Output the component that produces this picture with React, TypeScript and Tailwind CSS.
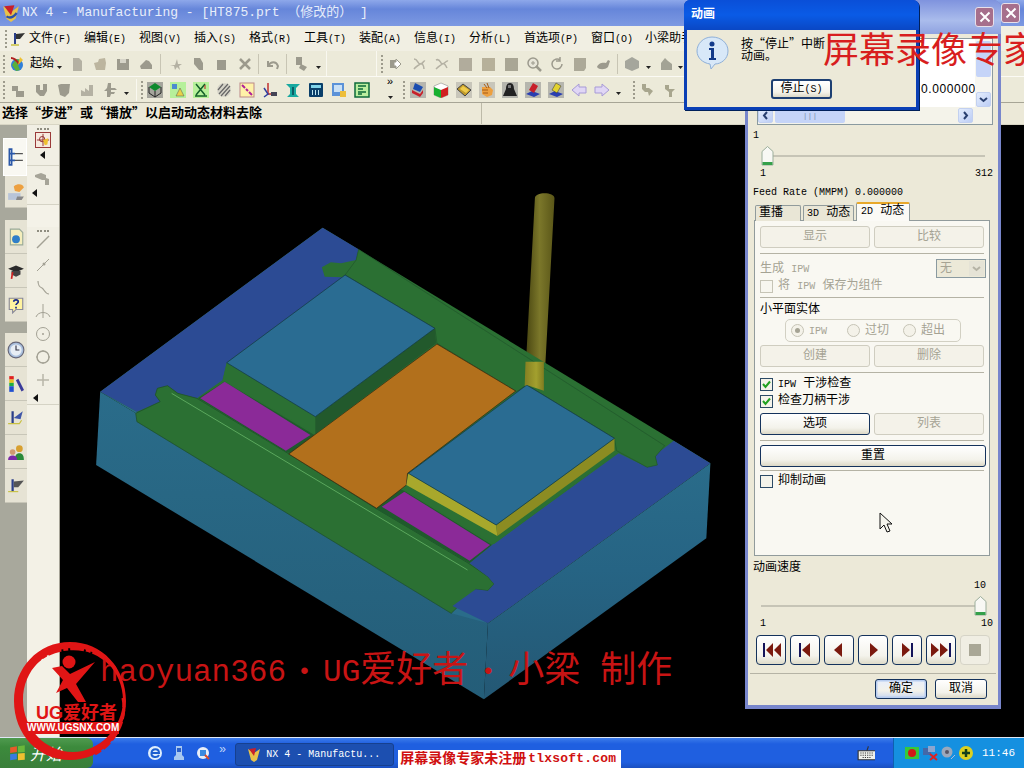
import React from 'react';

const L = ({ children }: { children: React.ReactNode }) => <span className="text-[10px]">{children}</span>;

const Ico = ({ children, size = 16 }: { children: React.ReactNode; size?: number }) => (
  <svg width={size} height={size} viewBox="0 0 16 16" className="shrink-0">
    {children}
  </svg>
);

const Cell = ({ children }: { children: React.ReactNode }) => (
  <div className="w-[23px] h-[22px] flex items-center justify-center shrink-0">
    <Ico>{children}</Ico>
  </div>
);

const Grip = ({ cls = '' }: { cls?: string }) => (
  <div className={`w-[2px] h-[18px] shrink-0 border-l-2 border-dotted border-[#9d9b8c] ${cls}`} />
);
const Sep = ({ cls = '' }: { cls?: string }) => <div className={`w-px h-[20px] shrink-0 bg-[#c8c5b4] ${cls}`} />;
const Drop = ({ cls = '' }: { cls?: string }) => (
  <svg width="7" height="16" viewBox="0 0 7 16" className={`shrink-0 ${cls}`}>
    <path d="M1 10h5l-2.500 3z" fill="#222" />
  </svg>
);

const G = '#b4b1a3';
const G2 = '#9c9a8d';

const fileIcons = [
  <path d="M4 2h6l3 3v10H4z" fill={G} />,
  <path d="M2 7l4-1 1-3 6-1 1 5-1 7H4z" fill="#bcb59f" />,
  <g><path d="M2 3h12v11H2z" fill={G2} /><path d="M5 3h6v4H5z" fill="#d6d4c8" /></g>,
  <path d="M2 10l6-6 3 1 3 4v4H3z" fill={G2} />,
];
const editIcons = [
  <path d="M2 9h5l2-6 1 5h4l-3 2 1 4-3-3-2 3-1-4z" fill={G} />,
  <path d="M3 2h6l3 5v7H8L3 8z" fill={G2} />,
  <path d="M3 4h9v10H3z" fill={G2} />,
  <path d="M3 3l10 10M13 3L3 13" stroke={G2} strokeWidth="2.500" />,
];
const undoIcon = <path d="M3 5v5h5M3 10c3-5 8-5 10 0l-1 3" stroke={G2} strokeWidth="2" fill="none" />;
const miscIcon = <g><path d="M2 1h6v8H2z" fill={G2} /><path d="M7 8l6 3-3 4-5-3z" fill={G2} /></g>;

const viewIcons = [
  <g><path d="M2 4h6v8H2z" fill={G2} /><path d="M8 3l5 5-5 5V10H6V6h2z" fill="#fff" stroke={G2} /></g>,
  <path d="M3 3c4 0 3 4 6 5s3-4 5-3M3 13c2-3 4-3 6-5s4 2 4 5" stroke={G} strokeWidth="1.500" fill="none" />,
  <path d="M2 4c4-2 4 3 6 4s4-4 6-3M2 13c3-3 4-3 6-5s4 2 5 4" stroke={G} strokeWidth="1.500" fill="none" />,
  <path d="M2 2h13v13H2z" fill="#b1ac9c" />,
  <path d="M2 2h13v13H2z" fill="#b6b09a" />,
  <path d="M2 2h13v13H2z" fill="#a9a695" />,
  <g><circle cx="7" cy="7" r="5" fill="#e8e6da" stroke={G2} strokeWidth="1.500" /><path d="M10 10l5 5" stroke={G2} strokeWidth="2.500" /><path d="M5 7h4M7 5v4" stroke={G2} /></g>,
  <path d="M13 8a5 5 0 1 1-2-4M11 1v4H7" stroke={G2} strokeWidth="1.500" fill="none" />,
  <path d="M2 2h12v10l-2 3H2z" fill="#aca998" />,
  <path d="M2 11c1-4 6-5 9-4l2-3 2 1-2 6c-3 3-9 3-11 0z" fill={G2} />,
];

const solidIcons = [
  <path d="M8 1l7 4v7l-7 3-7-3V5z" fill="#a5a69c" />,
  <path d="M3 14V7l4-5 3 3 4 3v6z" fill="#a3a395" />,
];

const greyRow = [
  <g><path d="M2 4h6v5h6v6H6V9H2z" fill={G2} /></g>,
  <path d="M3 3h4v5h3V2h4v7l-3 5H7l-4-4z" fill={G2} />,
  <path d="M2 3l3-1h9l-1 9-4 4-5-2z" fill={G2} />,
  <path d="M2 14V8l4 2V6l4 3V3h4v11z" fill={G} />,
  <path d="M6 1h3v5h4l2 2h-6v2h4l-1 2H9l-1 3H5V9H2l3-3z" fill={G2} />,
];

const camIcons = [
  <g><rect width="16" height="16" fill="#a5a59c" /><path d="M8 1l6 4-6 4-6-4z" fill="#0f8a2e" /><path d="M2 5v6l6 4 6-4V5M8 9v6" stroke="#222" fill="none" /></g>,
  <g><rect width="16" height="16" fill="#b6f09a" /><path d="M2 2h5v5H2z" fill="#4b8bd0" /><path d="M10 6l4 8H6z" fill="#e8d24a" stroke="#555" strokeWidth=".5" /></g>,
  <g><rect width="16" height="16" fill="#b6f09a" /><path d="M3 2l9 11M12 2L3 13M2 14h12" stroke="#14602a" strokeWidth="1.500" /><path d="M12 3v4" stroke="#c02020" /></g>,
  <g><circle cx="8" cy="8" r="7" fill="#d6d4c8" /><path d="M3 12L12 2M5 14L14 4M2 8l5-6M9 14l5-6" stroke="#666" strokeWidth="1.200" /></g>,
  <g><rect x="1" y="1" width="14" height="14" fill="#fff2a8" stroke="#b88" /><path d="M3 3l3 3M7 7l2 2M10 10l3 3" stroke="#b0209a" strokeWidth="2" /></g>,
  <g><path d="M6 1v11h9" stroke="#c03030" strokeWidth="1.500" fill="none" /><path d="M2 6l4 6-4 3" stroke="#3040a0" strokeWidth="1.500" fill="none" /><path d="M9 10h6v4H9z" fill="#445" /></g>,
  <g><path d="M1 2h14l-4 4v6l3 3H2l3-3V6z" fill="#18a9a0" /><path d="M7 5h2v8H7z" fill="#0c5c66" /></g>,
  <g><rect x="1" y="1" width="14" height="14" rx="1" fill="#0a3f6a" /><rect x="3" y="3" width="10" height="3" fill="#7fd3ea" /><path d="M4 8h1v5H4zM7 8h1v5H7zM10 8h1v5h-1z" fill="#bfe6f0" /></g>,
  <g><rect x="1" y="1" width="12" height="13" fill="#5b92d8" /><rect x="3" y="3" width="8" height="7" fill="#c9e0f5" /><rect x="9" y="9" width="6" height="6" fill="#edbe3a" /></g>,
  <g><rect x="1" y="1" width="14" height="14" fill="#bbee9f" stroke="#0d6a3a" strokeWidth="1.500" /><path d="M4 4h8M4 7h5M4 10h8M4 12h4" stroke="#0d6a3a" strokeWidth="1.500" /></g>,
];

const simIcons = [
  <g><rect width="16" height="16" fill="#b6b6ae" /><path d="M5 1l8 4-3 5-7-3z" fill="#1a4db0" /><path d="M2 8l8 4 3-4v3l-3 4-8-4z" fill="#c8202a" /></g>,
  <g><path d="M8 1l7 3v9l-7 3-7-3V4z" fill="#fff" stroke="#777" strokeWidth=".5" /><path d="M1 5l7 3v8l-7-3z" fill="#18b030" /><path d="M8 8l7-3v8l-7 3z" fill="#d02020" /></g>,
  <g><rect width="16" height="16" fill="#c8c6ba" /><path d="M1 7l6-5 8 6-6 6z" fill="#c09a2a" stroke="#444" /><path d="M4 7l3-3 6 4-3 3z" fill="#f0cc4c" /></g>,
  <g><rect width="16" height="16" fill="#c8c6ba" /><path d="M3 5h8l3 3-1 5-5 2-5-3z" fill="#eda040" /><path d="M5 2l3 4M8 1l2 5M3 8h6M4 11h5" stroke="#a55a15" /></g>,
  <g><rect width="16" height="16" fill="#b6b6ae" /><path d="M8 1c3 0 4 3 4 6l3 7H1l3-7c0-3 1-6 4-6z" fill="#222" /><path d="M6 3h3v3H6z" fill="#777" /></g>,
  <g><rect width="16" height="16" fill="#b6b6ae" /><path d="M1 12l6-3 8 3-6 3z" fill="#2a3fb0" /><path d="M4 8l4-7 5 3-4 7z" fill="#c8202a" /></g>,
  <g><rect width="16" height="16" fill="#b6b6ae" /><path d="M1 12l6-3 8 3-6 3z" fill="#2a3fb0" /><path d="M4 8l4-7 5 3-4 7z" fill="#e2d230" stroke="#333" strokeWidth=".5" /></g>,
  <path d="M1 8l7-6v3h7v6H8v3z" fill="#e0d6f5" stroke="#a79ad6" />,
  <path d="M15 8L8 2v3H1v6h7v3z" fill="#e0d6f5" stroke="#a79ad6" />,
];

const pipeIcons = [
  <path d="M3 2h4v4h3l4 3-4 5-1-4H6L3 7z" fill="#a8a68e" />,
  <path d="M3 3h4v4h6l-3 3v5H7v-5L3 7z" fill="#a8a68e" />,
];

const menus: [string, string, number][] = [
  ['文件', '(F)', 55], ['编辑', '(E)', 55], ['视图', '(V)', 55], ['插入', '(S)', 55],
  ['格式', '(R)', 55], ['工具', '(T)', 55], ['装配', '(A)', 55], ['信息', '(I)', 55],
  ['分析', '(L)', 55], ['首选项', '(P)', 67], ['窗口', '(O)', 54], ['小梁助手', '', 60],
];

const Toolbars = () => (
  <>
    <div className="h-[26px] flex items-center border-b border-[#fbfaf4] bg-[#ecead9]">
      <div className="w-[327px] h-full flex items-center pl-[3px] border-r border-[#f9f8f0] shrink-0">
        <Grip />
        <div className="ml-[4px]">
          <Ico>
            <circle cx="8" cy="9" r="6" fill="#2f7fd8" />
            <path d="M3 9l4-6 5 1-3 5 2 5-4 1z" fill="#5ab03a" />
            <path d="M2 2c3 0 6 3 8 6" stroke="#b02020" strokeWidth="2" fill="none" />
            <path d="M11 1l3 3-5 5z" fill="#eec030" />
          </Ico>
        </div>
        <span className="ml-[5px] text-[12px] text-black w-[24px]">起始</span>
        <Drop cls="ml-[2px]" />
        <div className="ml-[2px] flex">{fileIcons.map((c, i) => <Cell key={i}>{c}</Cell>)}</div>
        <Sep cls="ml-[3px]" />
        <div className="ml-[3px] flex">{editIcons.map((c, i) => <Cell key={i}>{c}</Cell>)}</div>
        <Sep cls="ml-[2px]" />
        <div className="ml-[2px]"><Cell>{undoIcon}</Cell></div>
        <Sep cls="ml-[2px]" />
        <div className="ml-[3px]"><Cell>{miscIcon}</Cell></div>
        <Drop cls="ml-[2px]" />
      </div>
      <div className="w-[49px] h-full shrink-0" />
      <div className="flex-1 h-full flex items-center pl-[4px] border-l border-[#f9f8f0]">
        <Grip />
        <div className="ml-px flex">{viewIcons.map((c, i) => <Cell key={i}>{c}</Cell>)}</div>
        <Sep cls="ml-[3px]" />
        <div className="ml-[2px]"><Cell>{solidIcons[0]}</Cell></div>
        <Drop cls="ml-[2px]" />
        <div className="ml-[2px]"><Cell>{solidIcons[1]}</Cell></div>
        <Drop />
        <div className="ml-[30px]"><Cell>{solidIcons[0]}</Cell></div>
        <Drop />
      </div>
    </div>
    <div className="h-[26px] flex items-center pl-[3px] bg-[#ecead9] border-b border-[#a7a596]">
      <Grip />
      <div className="ml-px flex">{greyRow.map((c, i) => <Cell key={i}>{c}</Cell>)}</div>
      <Drop cls="ml-[2px]" />
      <div className="w-px h-[22px] bg-[#f9f8f0] ml-[6px]" />
      <Grip cls="ml-[4px]" />
      <div className="flex">{camIcons.map((c, i) => <Cell key={i}>{c}</Cell>)}</div>
      <div className="ml-[12px] w-[10px] flex flex-col items-center leading-[8px] text-[11px] text-black">
        <span>»</span>
        <Drop />
      </div>
      <Grip cls="ml-[8px]" />
      <div className="ml-px flex">{simIcons.map((c, i) => <Cell key={i}>{c}</Cell>)}</div>
      <Drop cls="ml-[2px]" />
      <Grip cls="ml-[11px]" />
      <div className="flex">{pipeIcons.map((c, i) => <Cell key={i}>{c}</Cell>)}</div>
    </div>
  </>
);

const sideTabs: (React.ReactNode | null)[] = [
  <g><path d="M3 1h2v14H3zM3 5h5M3 11h5" stroke="#2b58a8" strokeWidth="1.500" fill="none" /><path d="M8 5h7M8 11h7" stroke="#555" /></g>,
  <g><path d="M1 9h11v6H1z" fill="#b8c4d8" /><path d="M6 3c4-3 8-2 9 1l-4 4-4-1z" fill="#eda040" /><path d="M9 12h6l-2 3H8z" fill="#888" /></g>,
  <g><path d="M3 1h8l3 3v11H3z" fill="#f4eebc" stroke="#9a9" /><circle cx="8" cy="10" r="3.500" fill="#2f7fc8" /></g>,
  <g><path d="M1 6l7-3 7 3-7 3z" fill="#2a2a2a" /><path d="M4 8v3l4 2 4-2V8" fill="#444" /><path d="M5 9l-1 6" stroke="#d02020" strokeWidth="1.500" /></g>,
  <g><path d="M2 2h12v10H8l-3 3v-3H2z" fill="#fff3a0" stroke="#889" /><path d="M6 5c0-2 4-2 4 0 0 1.500-2 1.500-2 3M8 9.500v1.500" stroke="#1a2a8a" strokeWidth="1.500" fill="none" /></g>,
  <g><circle cx="8" cy="8" r="7" fill="#aac0de" stroke="#667" /><circle cx="8" cy="8" r="5" fill="#e8eef5" /><path d="M8 4v4h3" stroke="#334" fill="none" /></g>,
  <g><path d="M2 1h4v3H2z" fill="#e02020" /><path d="M2 4h4v3H2z" fill="#e8c020" /><path d="M2 7h4v3H2z" fill="#20b040" /><path d="M2 10h4v5H2z" fill="#2050d0" /><path d="M9 4l5 10" stroke="#3a3a9a" strokeWidth="2.500" /></g>,
  <g><path d="M4 2h2v11H4z" fill="#2b3f8a" /><path d="M6 8l8-6-2 7z" fill="#3f56a8" /><path d="M1 13h10l2-3" stroke="#c8c040" fill="none" /></g>,
  <g><circle cx="11" cy="5" r="3" fill="#d8a030" /><path d="M7 15c0-5 2-6 4-6s4 1 4 6z" fill="#2a8a3a" /><circle cx="5" cy="8" r="2.500" fill="#d09a70" /><path d="M1 15c0-3 2-4 4-4s4 1 4 4z" fill="#7a2aa8" /></g>,
  <g><path d="M4 2h2v11H4z" fill="#2b3f8a" /><path d="M6 4l9-1-5 6H6z" fill="#555" /><path d="M1 13h9" stroke="#c8c040" /></g>,
];

const LeftRail = () => (
  <div className="w-[60px] shrink-0 flex bg-[#a8a89c]">
    <div className="w-[27px] pt-[13px] flex flex-col items-end">
      {[
        [0, 'h-[38px] w-[24px] bg-[#f9f8f2] border border-[#ffffff]'],
        [1, 'h-[32px] w-[22px] bg-[#e6e3d4] mb-[12px]'],
        [2, 'h-[34px] w-[22px] bg-[#e6e3d4]'],
        [3, 'h-[34px] w-[22px] bg-[#e6e3d4]'],
        [4, 'h-[34px] w-[22px] bg-[#e6e3d4] mb-[11px]'],
        [5, 'h-[34px] w-[22px] bg-[#e6e3d4]'],
        [6, 'h-[34px] w-[22px] bg-[#e6e3d4]'],
        [7, 'h-[34px] w-[22px] bg-[#e6e3d4]'],
        [8, 'h-[34px] w-[22px] bg-[#e6e3d4]'],
        [9, 'h-[34px] w-[22px] bg-[#e6e3d4]'],
      ].map(([i, cls]) => (
        <div key={i as number} className={`${cls} flex items-center justify-center border-b border-[#c8c6b8]`}>
          <Ico size={18}>{sideTabs[i as number]}</Ico>
        </div>
      ))}
    </div>
    <div className="w-[33px] bg-[#f1efe4] border-r border-[#a5a396] flex flex-col items-center">
      <div className="w-full h-[41px] border-b border-[#d5d3c5] flex flex-col items-center pt-[3px]">
        <div className="w-[12px] border-t-2 border-dotted border-[#8f8d80]" />
        <div className="mt-[2px] w-[16px] h-[16px] border border-[#9a3a3a] bg-[#f7e9de] flex items-center justify-center">
          <Ico size={14}>
            <path d="M8 1v14M1 8h14" stroke="#8a2020" />
            <circle cx="7" cy="7" r="3" fill="none" stroke="#8a2020" />
            <path d="M8 8l6-2-1 7-3 1z" fill="#eec030" />
          </Ico>
        </div>
        <svg width="6" height="8" className="mt-[3px]"><path d="M5 0v8L0 4z" fill="#111" /></svg>
      </div>
      <div className="w-full h-[39px] border-b border-[#d5d3c5] flex flex-col items-start pl-[7px] pt-[5px]">
        <Ico><path d="M1 4l6-2 5 2v3l3 1v6h-4V9H8L1 6z" fill="#a6a498" /></Ico>
        <svg width="6" height="8" className="mt-[2px] -ml-[2px]"><path d="M5 0v8L0 4z" fill="#111" /></svg>
      </div>
      <div className="w-full h-[22px] bg-[#f4f2e8]" />
      <div className="w-full h-[178px] border-b border-[#d5d3c5] flex flex-col items-center pt-[3px] relative">
        <div className="w-[12px] border-t-2 border-dotted border-[#8f8d80]" />
        <div className="mt-[2px] flex flex-col gap-[7px]">
          {[
            <path d="M2 14L14 2" stroke="#a3a194" strokeWidth="1.500" />,
            <g><path d="M2 14L14 2" stroke="#a3a194" /><circle cx="9" cy="7" r="1.500" fill="#a3a194" /></g>,
            <path d="M3 1c0 5 2 6 4 7s3 6 7 6" stroke="#a3a194" fill="none" strokeWidth="1.200" />,
            <path d="M8 1v14M1 14c2-6 12-6 14 0" stroke="#a3a194" fill="none" />,
            <g><circle cx="8" cy="8" r="6.500" stroke="#a3a194" fill="none" /><circle cx="8" cy="8" r="1" fill="#a3a194" /></g>,
            <g><circle cx="8" cy="8" r="6" stroke="#a3a194" fill="none" strokeWidth="1.400" /><path d="M8 1v2M8 13v2M1 8h2M13 8h2" stroke="#a3a194" /></g>,
            <path d="M8 2v12M2 8h12" stroke="#b8b6a8" strokeWidth="1.500" />,
          ].map((c, i) => <Ico key={i}>{c}</Ico>)}
        </div>
        <svg width="6" height="8" className="absolute left-[6px] bottom-[2px]"><path d="M5 0v8L0 4z" fill="#111" /></svg>
      </div>
      <div className="flex-1 w-full bg-[#f3f1e6]" />
    </div>
  </div>
);

const Model = () => (
  <svg viewBox="0 0 1568 1560" preserveAspectRatio="none" className="absolute left-[30px] top-[55px] w-[640px] h-[520px]">
    <defs>
      <linearGradient id="tool" x1="0" x2="1" y1="0" y2="0">
        <stop offset="0" stopColor="#45420f" />
        <stop offset=".5" stopColor="#7b772a" />
        <stop offset="1" stopColor="#5a5618" />
      </linearGradient>
      <linearGradient id="toolLow" x1="0" x2="1" y1="0" y2="0">
        <stop offset="0" stopColor="#847f22" />
        <stop offset=".6" stopColor="#a3a02e" />
        <stop offset="1" stopColor="#807c20" />
      </linearGradient>
      <linearGradient id="frontL" x1="0" x2="0" y1="0" y2="1">
        <stop offset="0" stopColor="#2a6c8a" />
        <stop offset="1" stopColor="#245d78" />
      </linearGradient>
      <linearGradient id="frontR" x1="0" x2="0" y1="0" y2="1">
        <stop offset="0" stopColor="#2a6c8a" />
        <stop offset=".45" stopColor="#266484" />
        <stop offset="1" stopColor="#245874" />
      </linearGradient>
    </defs>
    <path d="M1090 55c0-20 48-20 48 0L1112 632l-47-15z" fill="url(#tool)" />
    <path d="M25 635L15 855 965 1558 975 1330z" fill="url(#frontL)" />
    <path d="M975 1330L965 1558 1510 1075 1520 850z" fill="url(#frontR)" />
    <path d="M570 143L1430 782 1520 850 975 1330 25 635z" fill="#2b7033" />
    <path d="M25 635L115 695 115 725 885 1300 975 1330z" fill="#2a6c8a" />
    <path d="M570 143L658 208 652 240 615 250 590 247 568 262 575 290 620 292 335 548 325 600 262 655 215 640 190 617 165 625 160 645 172 665 115 695 25 635z" fill="#2c4b94" />
    <path d="M115 725L112 700 172 665 160 645 165 625 190 617 215 640 262 655 485 820 700 985 925 1148 975 1190 990 1212 975 1232 945 1228 885 1300z" fill="#2b7033" stroke="#1e4f2a" strokeWidth="2" />
    <path d="M200 640L925 1170" stroke="#6dbb6d" strokeWidth="2" fill="none" />
    <path d="M265 655L330 605 550 765 700 985 930 1150 985 1095 770 932 480 815z" fill="#1f5a2c" />
    <path d="M1430 782L1520 850 975 1330 888 1278 945 1228 975 1232 990 1212 975 1190 930 1150 985 1095 1295 820 1345 850 1365 862 1390 855 1385 825z" fill="#2c4b94" />
    <path d="M652 240L658 208 1408 797 1385 830 1390 855 1365 862 1345 848 1290 812 1285 775 1070 615 1045 635 850 490 845 445 625 285z" fill="#2b7033" stroke="#1e4f2a" strokeWidth="1.500" />
    <path d="M270 655L330 605 540 765 480 812z" fill="#8b2a98" />
    <path d="M715 980L770 935 980 1095 930 1142z" fill="#8b2a98" />
    <path d="M850 492L1043 633 778 880 775 915 702 985 487 822z" fill="#b2701c" stroke="#3a2a10" strokeWidth="2" />
    <path d="M335 548L552 710 552 762 325 600z" fill="#2b7033" />
    <path d="M552 710L845 445 848 490 552 762z" fill="#22592c" />
    <path d="M625 285L845 445 552 710 335 548z" fill="#2a6c92" stroke="#143a44" strokeWidth="2" />
    <path d="M775 915L998 1068 1285 812 1290 820 990 1092 770 932z" fill="#2b7033" />
    <path d="M780 880L995 1035 998 1068 775 915z" fill="#a8a82c" />
    <path d="M995 1035L1285 775 1285 812 998 1068z" fill="#8c8c22" />
    <path d="M1070 615L1285 775 995 1035 780 880z" fill="#2a6c92" stroke="#143a44" strokeWidth="2" />
    <path d="M1067 545L1112 545 1112 632 1070 615 1065 618z" fill="url(#toolLow)" />
  </svg>
);

const Logo = () => (
  <div className="absolute left-[10px] top-[638px] w-[125px] h-[125px]">
    <svg width="125" height="125" viewBox="0 0 125 125" className="absolute left-0 top-0">
      <path fillRule="evenodd" d="M60 4c32 0 56 26 56 59s-24 59-56 59S4 96 4 63 28 4 60 4zM64 10C36 10 13 32 13 62c0 28 22 52 50 52 26 0 50-24 50-52S90 10 64 10z" fill="#e01515" />
      <path d="M20 30C35 10 75 0 100 25" stroke="#e01515" strokeWidth="4" fill="none" strokeDasharray="14 2 5 2" />
      <path d="M113 60c4 20-6 44-28 56" stroke="#e01515" strokeWidth="3" fill="none" strokeDasharray="9 3" />
      <circle cx="59" cy="24" r="6.500" fill="#e01515" />
      <path d="M42 30L52 28 60 36 85 24 66 46 76 64 68 64 57 50 46 55 53 42z" fill="#e01515" />
    </svg>
    <div className="absolute left-[26px] top-[65px] text-[18px] leading-[20px] font-bold text-[#e01515] whitespace-nowrap [font-family:'Liberation_Sans','Noto_Sans_CJK_SC',sans-serif]">
      UG爱好者
    </div>
    <div className="absolute left-[17px] top-[84px] w-[92px] h-[12px] bg-[#e01515] text-white text-[10px] leading-[12px] font-bold text-center whitespace-nowrap [font-family:'Liberation_Sans',sans-serif]">
      WWW.UGSNX.COM
    </div>
  </div>
);

const Btn = ({ label, on, cls = 'w-[110px]' }: { label: string; on?: boolean; cls?: string }) => (
  <div
    className={`h-[22px] rounded-[3px] flex items-center justify-center text-[12px] shrink-0 ${cls} ${
      on
        ? 'border border-[#14325c] bg-[linear-gradient(#ffffff,#f3f2ea_70%,#dcd8c6)] text-black'
        : 'border border-[#cfcdc0] bg-[#f4f2e9] text-[#a5a394]'
    }`}
  >
    {label}
  </div>
);

const Check = ({ on, off }: { on?: boolean; off?: boolean }) => (
  <div className={`w-[13px] h-[13px] border flex items-center justify-center shrink-0 ${off ? 'border-[#c6c4b6] bg-[#f7f6ef]' : 'border-[#2b4a66] bg-[#f4f3ea]'}`}>
    {on && (
      <svg width="9" height="9" viewBox="0 0 9 9">
        <path d="M1 4l2.500 3L8 1.500" stroke="#21a121" strokeWidth="2" fill="none" />
      </svg>
    )}
  </div>
);

const Radio = ({ on, children }: { on?: boolean; children: React.ReactNode }) => (
  <div className="w-[56px] flex items-center gap-[5px] text-[12px] text-[#a5a394] shrink-0">
    <div className="w-[13px] h-[13px] rounded-full border border-[#c6c4b6] bg-[#f4f2e9] flex items-center justify-center shrink-0">
      {on && <div className="w-[5px] h-[5px] rounded-full bg-[#a5a394]" />}
    </div>
    <span>{children}</span>
  </div>
);

const Rule = ({ cls = '' }: { cls?: string }) => <div className={`h-px bg-[#b5b3a5] ${cls}`} />;

const Thumb = ({ cls }: { cls: string }) => (
  <svg width="13" height="20" viewBox="0 0 13 20" className={`absolute top-0 ${cls}`}>
    <path d="M6.500 .5L12 5.500V19H1V5.500z" fill="#f8f8f4" stroke="#9cae9c" />
    <path d="M1.500 16h10v3h-10z" fill="#35a04a" />
  </svg>
);

const playIcons = [
  <g><path d="M3 4h2v14H3z" fill="#14145a" /><path d="M13 4v14l-7-7zM21 4v14l-7-7z" fill="#7b1a0f" /></g>,
  <g><path d="M5 4h2v14H5z" fill="#14145a" /><path d="M16 4v14l-8-7z" fill="#7b1a0f" /></g>,
  <path d="M14 4v14l-8-7z" fill="#7b1a0f" />,
  <path d="M8 4v14l8-7z" fill="#7b1a0f" />,
  <g><path d="M15 4h2v14h-2z" fill="#14145a" /><path d="M6 4v14l8-7z" fill="#7b1a0f" /></g>,
  <g><path d="M19 4h2v14h-2z" fill="#14145a" /><path d="M1 4v14l8-7zM10 4v14l8-7z" fill="#7b1a0f" /></g>,
];

const ScrollBtn = ({ d, cls = '' }: { d: string; cls?: string }) => (
  <div className={`w-[15px] h-[15px] rounded-[2px] bg-[linear-gradient(135deg,#e4edfd,#bccdf5)] border border-[#c2d0f0] flex items-center justify-center ${cls}`}>
    <svg width="9" height="9" viewBox="0 0 9 9"><path d={d} stroke="#2a4070" strokeWidth="2" fill="none" /></svg>
  </div>
);

const CloseBtn = ({ cls = '' }: { cls?: string }) => (
  <div className={`w-[19px] h-[20px] rounded-[3px] border border-[#e8e0ea] bg-[#a66f8c] flex items-center justify-center ${cls}`}>
    <svg width="12" height="12" viewBox="0 0 12 12"><path d="M1.500 1.500l9 9M10.500 1.500l-9 9" stroke="#fff" strokeWidth="2" /></svg>
  </div>
);

const Panel = () => (
  <div className="absolute left-[745px] top-0 w-[256px] h-[709px] flex flex-col rounded-t-[8px] bg-[#7886cc]">
    <div className="h-[34px] shrink-0 flex items-center justify-end pr-[7px] rounded-t-[8px] bg-[linear-gradient(#7f93de,#aabcec_60%,#8fa2e0)]">
      <CloseBtn />
    </div>
    <div className="mx-[3px] mb-[4px] flex-1 bg-[#ece9d8] flex flex-col text-[12px] text-black">
      <div className="mt-[4px] ml-[9px] w-[236px] h-[87px] border border-[#8a9aa0] bg-white flex flex-col shrink-0">
        <div className="flex-1 flex min-h-0">
          <div className="flex-1 flex items-end pl-[163px] pb-[9px] text-[12px] tracking-[0.6px] overflow-hidden whitespace-nowrap [font-family:'Liberation_Sans',sans-serif]">0.0000000</div>
          <div className="w-[17px] flex flex-col items-center bg-[#f7f6f0]">
            <div className="flex-1" />
            <div className="h-[36px] w-[15px] bg-[#c5d4f8] rounded-[2px]" />
            <ScrollBtn d="M1 3l3.500 3L8 3" cls="mt-[15px]" />
          </div>
        </div>
        <div className="h-[17px] flex items-center bg-[#f4f3ea] shrink-0">
          <ScrollBtn d="M6 1L3 4.500 6 8" />
          <div className="ml-[2px] w-[70px] h-[15px] bg-[#c5d4f8] rounded-[2px] flex items-center justify-center text-[8px] leading-none text-[#8090b0]">|||</div>
          <div className="flex-1" />
          <ScrollBtn d="M3 1l3 3.500L3 8" />
          <div className="w-[19px]" />
        </div>
      </div>
      <div className="mt-[3px] ml-[5px] h-[14px] leading-[14px]"><L>1</L></div>
      <div className="mt-[4px] h-[20px] relative">
        <div className="absolute left-[18px] right-[13px] top-[9px] h-[2px] bg-[#c6c4b6]" />
        <Thumb cls="left-[13px]" />
      </div>
      <div className="mt-px h-[14px] leading-[14px] flex justify-between pl-[12px] pr-[5px]"><L>1</L><L>312</L></div>
      <div className="mt-[4px] h-[14px] leading-[14px] pl-[5px]"><L>Feed Rate (MMPM) 0.000000</L></div>
      <div className="mt-[4px] h-[18px] flex items-end pl-[7px] gap-[2px] relative z-10 shrink-0">
        <div className="w-[46px] h-[16px] bg-[#e9e6d6] border border-b-0 border-[#919b9c] rounded-t-[2px] pl-[3px] leading-[15px]">重播</div>
        <div className="w-[51px] h-[16px] bg-[#e9e6d6] border border-b-0 border-[#919b9c] rounded-t-[2px] pl-[3px] leading-[15px]"><L>3D</L> 动态</div>
        <div className="w-[54px] h-[19px] bg-[#fbfaf6] border border-b-0 border-[#919b9c] border-t-2 border-t-[#e8a82a] rounded-t-[2px] pl-[4px] leading-[15px]"><L>2D</L> 动态</div>
      </div>
      <div className="ml-[6px] w-[236px] h-[336px] -mt-px border border-[#919b9c] bg-[#f9f8f2] shrink-0 flex flex-col px-[5px]">
        <div className="mt-[5px] flex gap-[4px]"><Btn label="显示" /><Btn label="比较" /></div>
        <Rule cls="mt-[5px]" />
        <div className="mt-[5px] h-[19px] flex items-center text-[#a5a394]">
          <span>生成 <L>IPW</L></span>
          <div className="ml-auto mr-[-2px] w-[50px] h-[19px] border border-[#8a9aa0] bg-[#ece9d8] flex items-center justify-between pl-[3px] pr-px">
            <span>无</span>
            <div className="w-[15px] h-[15px] bg-[#e5e3d6] flex items-center justify-center">
              <svg width="9" height="9" viewBox="0 0 9 9"><path d="M1 3l3.500 3L8 3" stroke="#b5b3a5" strokeWidth="2" fill="none" /></svg>
            </div>
          </div>
        </div>
        <div className="mt-px h-[14px] flex items-center gap-[5px] text-[#a5a394]">
          <Check off /><span>将 <L>IPW</L> 保存为组件</span>
        </div>
        <Rule cls="mt-[4px]" />
        <div className="mt-[5px] h-[14px] leading-[14px]">小平面实体</div>
        <div className="mt-[2px] ml-[25px] w-[176px] h-[23px] rounded-[5px] border border-[#d2d0c3] flex items-center pl-[5px] shrink-0">
          <Radio on><L>IPW</L></Radio>
          <Radio>过切</Radio>
          <Radio>超出</Radio>
        </div>
        <div className="mt-[3px] flex gap-[4px]"><Btn label="创建" /><Btn label="删除" /></div>
        <Rule cls="mt-[5px]" />
        <div className="mt-[4px] h-[14px] flex items-center gap-[5px]"><Check on /><span><L>IPW</L> 干涉检查</span></div>
        <div className="mt-[3px] h-[14px] flex items-center gap-[5px]"><Check on /><span>检查刀柄干涉</span></div>
        <div className="mt-[5px] flex gap-[4px]"><Btn label="选项" on /><Btn label="列表" /></div>
        <Rule cls="mt-[5px]" />
        <div className="mt-[4px]"><Btn label="重置" on cls="w-[226px]" /></div>
        <Rule cls="mt-[3px]" />
        <div className="mt-[3px] h-[14px] flex items-center gap-[5px]"><Check /><span>抑制动画</span></div>
      </div>
      <div className="mt-[5px] h-[14px] leading-[14px] pl-[5px]">动画速度</div>
      <div className="mt-[3px] h-[14px] leading-[14px] text-right pr-[12px]"><L>10</L></div>
      <div className="mt-[4px] h-[20px] relative">
        <div className="absolute left-[13px] right-[20px] top-[9px] h-[2px] bg-[#c6c4b6]" />
        <Thumb cls="right-[11px]" />
      </div>
      <div className="mt-px h-[14px] leading-[14px] flex justify-between pl-[12px] pr-[5px]"><L>1</L><L>10</L></div>
      <div className="mt-[4px] ml-[8px] flex gap-[4px]">
        {playIcons.map((c, i) => (
          <div key={i} className="w-[30px] h-[30px] rounded-[4px] border border-[#14325c] bg-[linear-gradient(#fff,#f4f3ec_70%,#dedbc9)] flex items-center justify-center">
            <svg width="22" height="22" viewBox="0 0 22 22">{c}</svg>
          </div>
        ))}
        <div className="w-[30px] h-[30px] rounded-[4px] border border-[#d6d4c7] bg-[#f0eee3] flex items-center justify-center">
          <div className="w-[12px] h-[12px] bg-[#a9a796]" />
        </div>
      </div>
      <Rule cls="mt-[8px] mx-[2px]" />
      <div className="mt-[5px] flex justify-end gap-[8px] pr-[11px]">
        <div className="w-[52px] h-[20px] rounded-[3px] border border-[#14325c] bg-[linear-gradient(#e8eefc,#f3f2ea_60%,#c8d6f0)] flex items-center justify-center shadow-[inset_0_0_0_1.5px_#b8cdf0]">确定</div>
        <div className="w-[52px] h-[20px] rounded-[3px] border border-[#14325c] bg-[linear-gradient(#fff,#f3f2ea_70%,#dcd8c6)] flex items-center justify-center">取消</div>
      </div>
    </div>
  </div>
);

const Message = () => (
  <div className="absolute left-[684px] top-0 w-[235px] h-[110px] flex flex-col bg-[#0a3fb5] rounded-t-[6px] shadow-[1px_1px_0_#00205a]">
    <div className="h-[30px] shrink-0 flex items-center pl-[7px] text-[12px] font-bold text-white rounded-t-[6px] bg-[linear-gradient(#0a4fd8,#0a5be6_50%,#0a47c4)]">
      动画
    </div>
    <div className="mx-[3px] mb-[3px] flex-1 bg-[#ece9d8] flex flex-col">
      <div className="flex h-[49px]">
        <div className="ml-[9px] mt-[6px]">
          <svg width="33" height="33" viewBox="0 0 33 33">
            <path d="M16 1c9 0 16 6 16 14s-7 13-13 13l-4 5-1-5C7 27 1 22 1 15S7 1 16 1z" fill="#d8e8f8" stroke="#8fb0d8" />
            <circle cx="16" cy="8" r="2.500" fill="#123a8a" />
            <path d="M13 12h5v10h2v2h-7v-2h2v-8h-2z" fill="#123a8a" />
          </svg>
        </div>
        <div className="ml-[12px] mt-[7px] text-[12px] leading-[12px] text-black [font-family:'Noto_Sans_CJK_SC',sans-serif]">
          <div className="whitespace-nowrap">按“停止”中断</div>
          <div>动画。</div>
        </div>
      </div>
      <div className="ml-[84px] w-[61px] h-[20px] rounded-[3px] border-2 border-[#1d3f72] bg-[linear-gradient(#fff,#f3f2ea_70%,#dcd8c6)] flex items-center justify-center text-[12px] text-black">
        停止 <L>(S)</L>
      </div>
    </div>
  </div>
);

const Taskbar = () => (
  <div className="h-[31px] shrink-0 flex border-t border-[#dfe8f5] bg-[linear-gradient(#3b7bea,#1f5fe0_20%,#1f5fe0_80%,#1a4fc0)]">
    <div className="w-[93px] flex items-center pl-[9px] gap-[3px] rounded-r-[6px] bg-[linear-gradient(#4f9a4f,#3c8a3c_30%,#3a7f3a)]">
      <Ico size={18}>
        <path d="M1 3l6-1v5l-6 1z" fill="#e85a2a" />
        <path d="M8 2l6-1v6l-6 .500z" fill="#6ab83a" />
        <path d="M1 9l6-.500v5l-6 1z" fill="#3a7ae0" />
        <path d="M8 8.500l6-.500v6l-6 .500z" fill="#f0c030" />
      </Ico>
      <span className="text-[16px] italic text-white [font-family:'Noto_Sans_CJK_SC',sans-serif]">开始</span>
    </div>
    <div className="ml-[54px] flex items-center gap-[8px]">
      <Ico><circle cx="8" cy="8" r="7" fill="#dfeefc" /><path d="M4 8h8c0-5-7-5-7.500 0s6 5 7.500 2" stroke="#1d5fd0" strokeWidth="2" fill="none" /></Ico>
      <Ico><path d="M5 1h6v9l2 2v3H3v-3l2-2z" fill="#a8c8f0" /><path d="M6 3h4v4H6z" fill="#2a5fc8" /></Ico>
      <Ico><circle cx="8" cy="8" r="6" fill="#e8eef8" /><path d="M5 5h6v6H5z" fill="#3a8ae0" /><path d="M10 10l4 4" stroke="#d84a2a" strokeWidth="2" /></Ico>
      <span className="text-[12px] leading-none text-[#bcd2f8] self-start mt-[6px]">»</span>
    </div>
    <div className="ml-[9px] mt-[5px] mb-[2px] w-[159px] rounded-[3px] bg-[#1c4fb0] border border-[#16408f] flex items-center pl-[10px] gap-[4px] text-white whitespace-nowrap">
      <Ico>
        <path d="M2 2l6 4 6-4-3 11-3 2-3-2z" fill="#e8c24a" />
        <path d="M3 2l5 7 2-8z" fill="#c8202a" />
      </Ico>
      <span className="text-[10px]">NX 4 - Manufactu...</span>
    </div>
    <div className="ml-[4px] mt-[12px] w-[223px] bg-white flex items-center pl-[2px] text-[14px] font-bold text-[#d01010] whitespace-nowrap overflow-hidden">
      屏幕录像专家未注册 <span className="ml-[2px] text-[13px] tracking-[0.2px]">tlxsoft.com</span>
    </div>
    <div className="flex-1 flex items-center justify-end pr-[18px]">
      <Ico size={18}>
        <path d="M1 6h16v8H1z" fill="#eef0ec" stroke="#333" />
        <path d="M3 8h12M3 10h12M5 12h8" stroke="#333" strokeDasharray="1 1" />
        <path d="M9 6c0-2 1-2 1-4" stroke="#333" fill="none" />
      </Ico>
    </div>
    <div className="w-[131px] bg-[#1590e0] border-l border-[#0e60b0] flex items-center pl-[10px] gap-[2px] text-white">
      <Ico><rect x="1" y="2" width="14" height="12" fill="#36c83a" /><circle cx="8" cy="8" r="4" fill="#d01818" /></Ico>
      <Ico><rect x="1" y="3" width="8" height="7" fill="#4468a8" /><rect x="6" y="1" width="7" height="6" fill="#8ca6d0" /><path d="M8 9l7 6M15 9l-7 6" stroke="#e02020" strokeWidth="2" /></Ico>
      <Ico><circle cx="7" cy="7" r="5.500" fill="#9aa8bc" /><circle cx="7" cy="7" r="2" fill="#556" /><path d="M11 14l4-4" stroke="#aabbdd" /></Ico>
      <Ico><circle cx="8" cy="8" r="7" fill="#dcd020" /><path d="M8 4v8M4 8h8" stroke="#14401a" strokeWidth="2.500" /></Ico>
      <span className="ml-[6px] text-[11px] whitespace-nowrap">11:46</span>
    </div>
  </div>
);

export default function App() {
  return (
    <div className="relative w-[1024px] h-[768px] overflow-hidden flex flex-col bg-black [font-family:'Liberation_Mono','Noto_Sans_CJK_SC',monospace]">
      <div className="h-[26px] shrink-0 flex items-center justify-between pl-[2px] pr-[4px] bg-[linear-gradient(#8ea8ea,#6686da_35%,#7d99e2)]">
        <div className="flex items-center gap-[2px] text-[13px] text-[#e8eefa] whitespace-pre">
          <Ico size={18}>
            <path d="M1 2l7 5 7-5-3 11-4 3-4-3z" fill="#e8c24a" />
            <path d="M2 2l6 8 3-9z" fill="#c8202a" />
            <path d="M4 11c3 2 6 1 9-3" stroke="#2a50a8" strokeWidth="2" fill="none" />
          </Ico>
          <span>NX 4 - Manufacturing - [HT875.prt （修改的） ]</span>
        </div>
        <CloseBtn />
      </div>
      <div className="h-[25px] shrink-0 flex items-center pl-[5px] bg-[#f1efe3] text-[12px] text-black">
        <Grip />
        <div className="ml-[3px] w-[19px] shrink-0">
          <Ico>
            <path d="M4 2h2v11H4z" fill="#2b3f8a" />
            <path d="M6 3l9-1-5 6H6z" fill="#333" />
            <path d="M1 14h8" stroke="#c8c040" strokeWidth="1.500" />
          </Ico>
        </div>
        {menus.map(([a, b, w]) => (
          <div key={a} className="shrink-0 whitespace-nowrap" style={{ width: w }}>
            {a}<L>{b}</L>
          </div>
        ))}
      </div>
      <Toolbars />
      <div className="h-[22px] shrink-0 flex items-center bg-[#ece9d8] border-b border-[#d8d5c4] [font-family:'Noto_Sans_CJK_SC',sans-serif]">
        <div className="w-[482px] h-full border-r border-[#bdbaa8] pl-[2px] pb-[3px] flex items-center text-[13px] font-bold text-black whitespace-nowrap">
          选择“步进”或“播放”以启动动态材料去除
        </div>
      </div>
      <div className="flex-1 flex min-h-0">
        <LeftRail />
        <div className="flex-1 relative bg-black">
          <Model />
          <div className="absolute left-[40px] top-[528px] flex items-center h-[40px] text-[31px] text-[#c81414] whitespace-nowrap">
            <span>haoyuan366</span>
            <span className="w-[37px] text-center text-[24px]">•</span>
            <span>UG</span>
            <span className="text-[36px]">爱好者</span>
            <span className="w-[40px] text-center text-[24px]">•</span>
            <span className="text-[36px]">小梁</span>
            <span className="ml-[20px] text-[36px]">制作</span>
          </div>
        </div>
      </div>
      <Taskbar />
      <Panel />
      <Message />
      <div className="absolute left-[823px] top-[29px] text-[36px] leading-[36px] text-[#d81e1e] whitespace-nowrap [font-family:'Noto_Sans_CJK_SC',sans-serif]">
        屏幕录像专家
      </div>
      <Logo />
      <svg width="14" height="22" viewBox="0 0 14 22" className="absolute left-[879px] top-[512px]">
        <path d="M1 1v16l4-4 3 7 3-1-3-7h5z" fill="#f5f4ec" stroke="#111" />
      </svg>
    </div>
  );
}
